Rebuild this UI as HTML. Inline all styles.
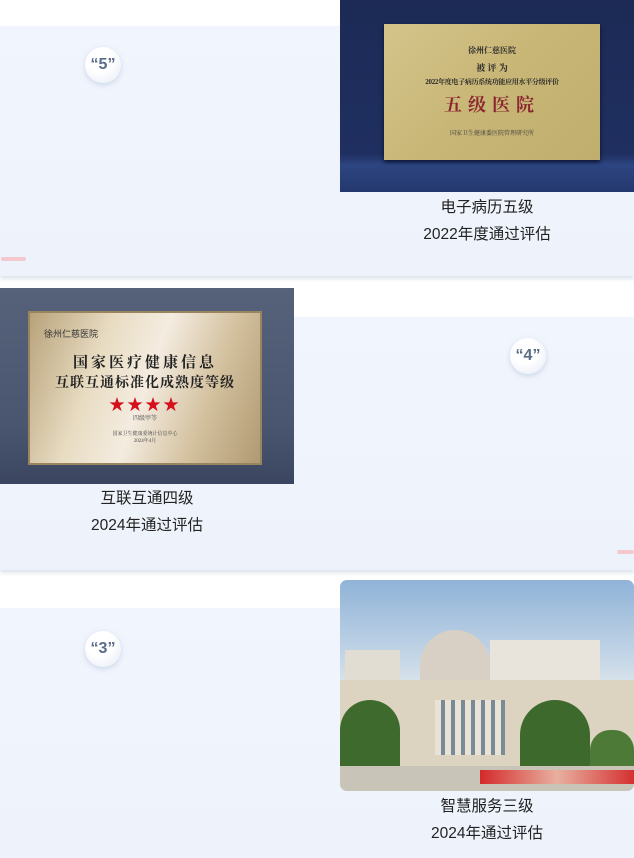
<!DOCTYPE html>
<html><head><meta charset="utf-8"><style>
*{margin:0;padding:0;box-sizing:border-box}
body{width:634px;height:853px;background:#fff;position:relative;overflow:hidden;font-family:"Liberation Sans","Noto Sans CJK SC",sans-serif}
.abs{position:absolute}
.panel{position:absolute;left:0;width:634px;background:linear-gradient(#f1f5fd,#eef3fb);box-shadow:0 3px 4px rgba(200,210,225,.6)}
.bub{position:absolute;width:36px;height:36px;border-radius:50%;background:radial-gradient(circle at 40% 35%,#fff 40%,#e4eaf5 100%);box-shadow:0 2px 6px rgba(180,195,220,.6);text-align:center;line-height:36px;font-weight:bold;color:#5a6c88;font-size:16px}
.pink{position:absolute;height:4px;background:#f3c9cf;border-radius:2px}
.cap{position:absolute;text-align:center;font-size:15.5px;color:#222;line-height:27px;width:294px}
.s{font-family:"Liberation Serif","Noto Serif CJK SC",serif;position:absolute;width:100%;text-align:center}
</style></head><body>
<div class="panel" style="top:26px;height:250px"></div>
<div class="panel" style="top:317px;height:253px"></div>
<div class="panel" style="top:608px;height:250px"></div>

<div class="bub" style="left:85px;top:47px">“5”</div>
<div class="bub" style="left:510px;top:338px">“4”</div>
<div class="bub" style="left:85px;top:631px">“3”</div>
<div class="pink" style="left:1px;top:257px;width:25px"></div>
<div class="pink" style="left:617px;top:550px;width:17px"></div>

<!-- image 1 -->
<div class="abs" style="left:340px;top:0;width:294px;height:192px;background:linear-gradient(#1c2a55 0%,#1f2f60 80%,#2d4582 86%,#24386e 100%)">
 <div class="abs" style="left:44px;top:24px;width:216px;height:136px;background:linear-gradient(135deg,#d4c48a,#c8b676 50%,#bfae6e);box-shadow:0 2px 4px #0a1230">
  <div class="s" style="top:21px;font-size:8px;font-weight:bold;color:#2a2a2a">徐州仁慈医院</div>
  <div class="s" style="top:37px;font-size:9px;font-weight:bold;color:#2a2a2a">被 评 为</div>
  <div class="s" style="top:53px;font-size:7px;font-weight:bold;color:#2a2a2a;letter-spacing:-.3px">2022年度电子病历系统功能应用水平分级评价</div>
  <div class="s" style="top:67px;font-size:18px;font-weight:bold;color:#8c2630;letter-spacing:6px">五级医院</div>
  <div class="s" style="top:104px;font-size:6px;color:#3a3a3a">国家卫生健康委医院管理研究所</div>
 </div>
</div>
<div class="cap" style="left:340px;top:194px">电子病历五级<br>2022年度通过评估</div>

<!-- image 2 -->
<div class="abs" style="left:0;top:288px;width:294px;height:196px;background:linear-gradient(#56617a,#4a5670 70%,#3b4560)">
 <div class="abs" style="left:28px;top:23px;width:234px;height:154px;background:linear-gradient(110deg,#b8a27a,#e8dcc2 30%,#f4ece0 50%,#d2bf9c 75%,#b09a72);border:2px solid #9a8460">
  <div class="abs" style="left:14px;top:14px;font-size:9px;color:#333">徐州仁慈医院</div>
  <div class="s" style="top:38px;font-size:15px;color:#222;letter-spacing:3px;font-weight:bold">国家医疗健康信息</div>
  <div class="s" style="top:59px;font-size:14px;color:#222;letter-spacing:1px;font-weight:bold">互联互通标准化成熟度等级</div>
  <div class="s" style="top:79px;font-size:16px;color:#d4101c;letter-spacing:2px">★★★★</div>
  <div class="s" style="top:100px;font-size:6px;color:#444">四级甲等</div>
  <div class="s" style="top:117px;font-size:5px;color:#444">国家卫生健康委统计信息中心<br>2024年4月</div>
 </div>
</div>
<div class="cap" style="left:0;top:485px">互联互通四级<br>2024年通过评估</div>

<!-- image 3 -->
<div class="abs" style="left:340px;top:580px;width:294px;height:211px;border-radius:7px;overflow:hidden;background:linear-gradient(#8fb3d8,#c9d9e8 40%,#e6eaec 55%)">
 <div class="abs" style="left:150px;top:60px;width:110px;height:60px;background:#e8e4dc"></div>
 <div class="abs" style="left:5px;top:70px;width:55px;height:40px;background:#e2ddd3"></div>
 <div class="abs" style="left:80px;top:50px;width:70px;height:60px;border-radius:35px 35px 0 0;background:#d8d0c4"></div>
 <div class="abs" style="left:0;top:100px;width:294px;height:90px;background:#dcd3c0"></div>
 <div class="abs" style="left:95px;top:120px;width:70px;height:55px;background:repeating-linear-gradient(90deg,#e9e3d6 0 6px,#7a8a98 6px 10px)"></div>
 <div class="abs" style="left:0;top:120px;width:60px;height:80px;border-radius:30px 30px 0 0;background:#3f6a2e"></div>
 <div class="abs" style="left:180px;top:120px;width:70px;height:70px;border-radius:35px 35px 0 0;background:#3d6a2c"></div>
 <div class="abs" style="left:250px;top:150px;width:44px;height:45px;border-radius:20px 20px 0 0;background:#4d7a36"></div>
 <div class="abs" style="left:0;top:186px;width:294px;height:25px;background:#c9c4b8"></div>
 <div class="abs" style="left:140px;top:190px;width:154px;height:14px;background:linear-gradient(90deg,#d42a2a,#e8b0a0,#d43030)"></div>
</div>
<div class="cap" style="left:340px;top:793px">智慧服务三级<br>2024年通过评估</div>
</body></html>
